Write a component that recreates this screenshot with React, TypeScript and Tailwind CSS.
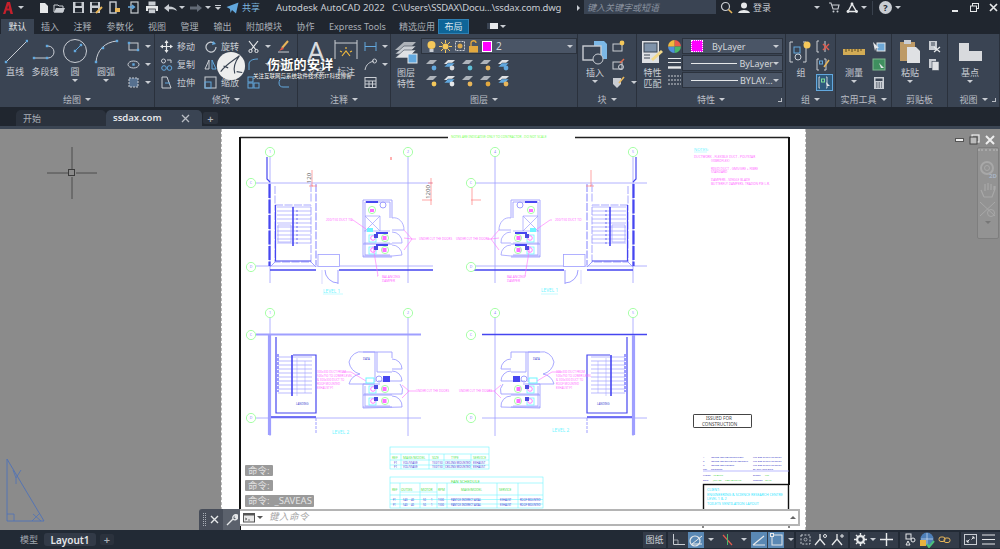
import React from "react";

const G = "#c9cdd3";
const B = "#62a8de";
const W = "#e6e8ea";
const Y = "#e8b65a";

type SP = { w: number; h: number; children?: React.ReactNode; className?: string };
const S = ({ w, h, children, className }: SP) => (
  <svg width={w} height={h} viewBox={`0 0 ${w} ${h}`} fill="none" className={"shrink-0 " + (className || "")}>
    {children}
  </svg>
);
const Caret = ({ className }: { className?: string }) => (
  <span className={"inline-block w-0 h-0 border-x-[3px] border-x-transparent border-t-[3px] border-t-[#c9cdd3] " + (className || "")} />
);

/* ---------- title bar icons ---------- */
const Logo = () => (
  <S w={12} h={14}>
    <path d="M1 13 L5 1 H8 L11 13 H8.5 L7.5 9.5 H4.5 L3.4 13 Z" fill="#c4202c" />
    <path d="M5.3 7.5 H7 L6.2 4 Z" fill="#20262f" />
  </S>
);
const NewI = () => (<S w={10} h={12}><path d="M1 1 H6 L9 4 V11 H1 Z" fill={W} /></S>);
const OpenI = () => (<S w={12} h={12}><path d="M1 3 H5 L6 4 H10 V10 H1 Z" stroke={G} /><path d="M3 6 H12 L10 10.5 H1 Z" fill={G} /></S>);
const SaveI = () => (<S w={13} h={13}><rect x="1" y="1" width="11" height="11" fill={G} /><rect x="3.5" y="1.5" width="6" height="3.5" fill="#20262f" /><rect x="3" y="7" width="7" height="4.5" fill="#20262f" /></S>);
const SaveAsI = () => (<S w={14} h={13}><rect x="1" y="1" width="10" height="11" fill={G} /><rect x="3" y="1.5" width="6" height="3" fill="#20262f" /><rect x="3" y="7" width="6" height="4.5" fill="#20262f" /><path d="M7 12 L13 6" stroke={Y} strokeWidth="2" /></S>);
const PhoneI = () => (<S w={12} h={13}><rect x="1" y="1" width="6" height="11" stroke={G} strokeWidth="1.4" /><rect x="6" y="7" width="5" height="4" fill={Y} /></S>);
const CloudI = () => (<S w={12} h={13}><rect x="3" y="1" width="7" height="11" stroke={G} strokeWidth="1.2" /><path d="M0 6 H6 M4 4 L6.5 6 L4 8" stroke={B} strokeWidth="1.3" /></S>);
const PrintI = () => (<S w={14} h={13}><rect x="3.5" y="0.5" width="7" height="4" fill={G} /><rect x="1" y="5" width="12" height="5" fill={W} /><rect x="3.5" y="8" width="7" height="4.5" fill={G} stroke="#20262f" strokeWidth=".7" /></S>);
const UndoI = ({ c = G }: { c?: string }) => (<S w={15} h={10}><path d="M1 5 L6 1 V3.5 C10 3.5 13 5 14 8 C12 6.5 9.5 6.2 6 6.3 V9 Z" fill={c} /></S>);
const RedoI = () => (<S w={14} h={10}><path d="M13 5 L8 1 V3.5 H1 V6.5 H8 V9 Z" fill="#626a76" /></S>);
const ShareI = () => (<S w={13} h={12}><path d="M0.5 5 L12.5 0.5 L10 11.5 L6 8 L4.5 11 L4 7 Z" fill={B} /></S>);

/* ---------- title bar ---------- */
function TitleBar() {
  return (
    <div className="h-[18px] flex items-center pb-[3px] bg-[#20262f] text-[#c9cdd3] text-[11px] leading-none relative">
      <div className="flex items-center pl-[2px] w-[26px] gap-[4px]"><Logo /><Caret /></div>
      <div className="flex items-center w-[250px] pl-[13px]">
        <NewI />
        <span className="w-[4px]" /><OpenI />
        <span className="w-[7px]" /><SaveI />
        <span className="w-[4px]" /><SaveAsI />
        <span className="w-[6px]" /><PhoneI />
        <span className="w-[7px]" /><CloudI />
        <span className="w-[5px]" /><PrintI />
        <span className="w-[4px]" /><UndoI />
        <Caret className="ml-[1px]" />
        <span className="w-[4px]" /><RedoI />
        <Caret className="ml-[2px]" />
        <span className="ml-[4px] w-[6px] h-[5px] border-t border-[#c9cdd3] flex justify-center pt-[1px]"><Caret /></span>
        <span className="w-[5px]" /><ShareI />
        <span className="ml-[3px] text-[9px] text-[#7eb6df] whitespace-nowrap">共享</span>
      </div>
      <span className="text-[9.5px] w-[116px] whitespace-nowrap">Autodesk AutoCAD 2022</span>
      <span className="text-[9.5px] w-[185px] whitespace-nowrap tracking-[-0.2px]">C:\Users\SSDAX\Docu...\ssdax.com.dwg</span>
      <span className="w-0 h-0 border-y-[3px] border-y-transparent border-l-[3px] border-l-[#c9cdd3] mr-[4px]" />
      <div className="w-[132px] h-[14px] bg-[#3a4453] flex items-center pl-[3px] text-[9px] italic text-[#8b93a0] self-start">键入关键字或短语</div>
      <span className="w-[4px]" />
      <S w={13} h={13}><circle cx="5.5" cy="5.5" r="4" stroke={G} strokeWidth="1.2" /><path d="M8.5 8.5 L12 12" stroke={Y} strokeWidth="1.6" /></S>
      <span className="w-[5px]" />
      <S w={12} h={12}><circle cx="6" cy="3.5" r="3" fill={W} /><path d="M0 11 C1 7 11 7 12 11 Z" fill={W} /></S>
      <span className="ml-[3px] text-[9px] w-[61px]">登录</span>
      <Caret />
      <span className="w-[9px]" />
      <S w={11} h={11}><path d="M0 1 H2 L4 7 H9 L10 3 H3" stroke={G} strokeWidth="1.1" /><circle cx="4.5" cy="9.5" r="1" fill={G} /><circle cx="8.5" cy="9.5" r="1" fill={G} /></S>
      <span className="w-[6px]" />
      <S w={12} h={11}><path d="M6 2 L2 9.5 H10.5 Z" stroke={W} strokeWidth="1.4" /><circle cx="6" cy="2" r="1.4" fill={W} /><circle cx="2" cy="9.5" r="1.4" fill={W} /><circle cx="10.5" cy="9.5" r="1.4" fill={W} /></S>
      <Caret className="ml-[3px]" />
      <span className="ml-[5px] w-px h-[14px] bg-[#39414d]" />
      <span className="ml-[6px] w-[13px] h-[13px] rounded-full bg-[#c9cdd3] text-[#20262f] text-[9px] font-bold flex items-center justify-center">?</span>
      <Caret className="ml-[3px]" />
      <span className="w-[51px]" />
      <span className="w-[6px] h-[2px] bg-[#e6e8ea] mt-[7px]" />
      <span className="w-[12px]" />
      <S w={9} h={9}><rect x="2.5" y=".5" width="6" height="5" stroke={W} /><rect x=".5" y="3" width="6" height="5.5" fill="#20262f" stroke={W} /></S>
      <span className="w-[10px]" />
      <S w={9} h={9}><path d="M1 1 L8 8 M8 1 L1 8" stroke={W} strokeWidth="1.7" /></S>
    </div>
  );
}

/* ---------- ribbon tab row ---------- */
const TABS: [string, number, boolean?][] = [
  ["默认", 33, true], ["插入", 32], ["注释", 33], ["参数化", 42], ["视图", 32], ["管理", 33], ["输出", 33], ["附加模块", 50], ["协作", 33], ["Express Tools", 71], ["精选应用", 48],
];
function TabRow() {
  return (
    <div className="h-[16px] flex items-end bg-[#20262f] text-[9px] leading-none text-[#a9aeb6]">
      <span className="w-[1px]" />
      {TABS.map(([t, w, a]) => (
        <span key={t} style={{ width: w }} className={"h-[15px] flex items-center justify-center whitespace-nowrap " + (a ? "bg-[#3a4453] text-[#e4e6e9]" : "")}>{t}</span>
      ))}
      <span className="ml-[-3px] w-[31px] h-[15px] flex items-center justify-center bg-[#0e6598] border border-[#2f7fb2] text-[#d9e6ef]">布局</span>
      <span className="ml-[18px] mb-[5px] w-[11px] h-[6px] bg-[#e6e8ea] border-l-[3px] border-[#3a4453]" />
      <Caret className="ml-[2px] mb-[6px]" />
    </div>
  );
}

/* ---------- ribbon parts ---------- */
const Dot = ({ x, y }: { x: number; y: number }) => <rect x={x - 1.2} y={y - 1.2} width="2.4" height="2.4" fill={B} />;

const Panel = ({ w, label, caret = true, corner, children }: { w: number; label: string; caret?: boolean; corner?: boolean; children: React.ReactNode }) => (
  <div style={{ width: w }} className="h-full flex flex-col border-r border-[#2a313c] shrink-0 relative">
    <div className="h-[58px] flex pt-[4px]">{children}</div>
    <div className="h-[15px] flex items-center justify-center gap-[4px] text-[9px] text-[#b9bdc4] leading-none">
      {label}
      {caret && <Caret />}
      {corner && <span className="absolute right-[3px] bottom-[5px] w-[4px] h-[4px] border-r border-b border-[#b9bdc4]" />}
    </div>
  </div>
);
const Big = ({ w, icon, label, label2, caret, ih = 28 }: { w: number; icon: React.ReactNode; label: string; label2?: string; caret?: boolean; ih?: number }) => (
  <div style={{ width: w }} className="flex flex-col items-center shrink-0 text-[9px] leading-[11px] text-[#c9cdd3]">
    <div style={{ height: ih }} className="flex items-center justify-center pb-[2px]">{icon}</div>
    <span className="whitespace-nowrap">{label}</span>
    {label2 && <span className="whitespace-nowrap">{label2}</span>}
    {caret && <Caret className="mt-[2px]" />}
  </div>
);
const Rows = ({ w, children, className }: { w: number; children: React.ReactNode; className?: string }) => (
  <div style={{ width: w }} className={"flex flex-col justify-start gap-[1px] shrink-0 text-[9px] text-[#c9cdd3] leading-none " + (className || "")}>{children}</div>
);
const Row = ({ icon, label, caret }: { icon: React.ReactNode; label?: string; caret?: boolean }) => (
  <div className="h-[17px] flex items-center gap-[4px] whitespace-nowrap">
    {icon}
    {label && <span>{label}</span>}
    {caret && <Caret className="ml-[1px]" />}
  </div>
);

const MiniLayer = ({ dot = B, style = 0 }: { dot?: string; style?: number }) => (
  <S w={14} h={14}>
    <path d="M1 6 L5 2 H12 L8 6 Z" fill={style ? "#dfe1e4" : "#aeb3ba"} />
    {style === 1 && <path d="M1 9 L5 5 H12 L8 9 Z" fill={B} stroke="#3a4453" strokeWidth=".5" />}
    <circle cx="9" cy="10" r="2.4" fill={dot} />
  </S>
);
const Bulb = () => (<S w={11} h={13}><circle cx="5.5" cy="5" r="4" fill="#f5c85a" /><rect x="3.5" y="9" width="4" height="3" fill={G} /></S>);
const Sun = () => (<S w={13} h={13}><circle cx="6.5" cy="6.5" r="3" fill="#f5c85a" /><path d="M6.5 0 V3 M6.5 10 V13 M0 6.5 H3 M10 6.5 H13 M2 2 L4 4 M9 9 L11 11 M11 2 L9 4 M4 9 L2 11" stroke="#f5c85a" /></S>);
const Sel = () => (<S w={12} h={12}><rect x="1.5" y="1.5" width="9" height="9" stroke={G} strokeDasharray="2 1" /><circle cx="6" cy="6" r="2.5" fill="#d9a84e" /></S>);
const Lock = () => (<S w={11} h={13}><rect x="1" y="6" width="9" height="6.5" fill="#e3a93f" /><path d="M3 6 V3 C3 0 8 0 8 3" stroke="#e3a93f" strokeWidth="1.3" /></S>);

const DD = ({ swatch, line, text }: { swatch?: boolean; line?: boolean; text: string }) => (
  <div className="w-[101px] h-[16px] bg-[#4a5566] border border-[#2c333e] flex items-center pl-[8px] pr-[3px] text-[9px] text-[#d5d8dc] leading-none">
    {swatch && <span className="w-[12px] h-[12px] bg-[#ff00ff] border border-dotted border-white mr-[9px]" />}
    {line && <span className="w-[47px] h-px bg-[#e6e8ea] mr-[2px]" />}
    <span className="flex-1 whitespace-nowrap">{text}</span>
    <Caret />
  </div>
);

function Ribbon() {
  return (
    <div className="h-[73px] flex bg-[#3a4453]">
      <Panel w={155} label="绘图">
        <Big w={30} label="直线" icon={<S w={26} h={26}><path d="M4 24 L25 3" stroke={G} /><Dot x={4} y={24} /><Dot x={25} y={3} /></S>} />
        <Big w={30} label="多段线" icon={<S w={26} h={26}><path d="M2 20 H16 A6 6 0 0 0 16 8 H15" stroke={G} /><Dot x={2} y={20} /><Dot x={15} y={20} /><Dot x={15} y={8} /></S>} />
        <Big w={30} label="圆" caret icon={<S w={26} h={26}><circle cx="13" cy="13" r="11.5" stroke={G} /><path d="M13 13 L19 7" stroke={B} /><Dot x={13} y={13} /><Dot x={19} y={7} /></S>} />
        <Big w={32} label="圆弧" caret icon={<S w={26} h={26}><path d="M3 24 C4 12 12 4 24 3" stroke={G} /><Dot x={3} y={24} /><Dot x={10} y={10} /><Dot x={24} y={3} /></S>} />
        <Rows w={33} className="pl-[5px]">
          <Row caret icon={<S w={13} h={13}><rect x="2" y="3" width="9" height="7" stroke={G} /><Dot x={2} y={3} /><Dot x={11} y={10} /></S>} />
          <Row caret icon={<S w={13} h={13}><ellipse cx="6.5" cy="6.5" rx="5.5" ry="3.5" stroke={G} /><Dot x={6.5} y={6.5} /></S>} />
          <Row caret icon={<S w={13} h={13}><rect x="2" y="2" width="9" height="9" fill="#56708f" stroke={G} strokeDasharray="2 1" /></S>} />
        </Rows>
      </Panel>
      <Panel w={143} label="修改">
        <Rows w={44} className="pl-[5px]">
          <Row label="移动" icon={<S w={13} h={13}><path d="M6.5 1 V12 M1 6.5 H12" stroke={W} strokeWidth="1.2" /><path d="M6.5 0 L4.5 3 H8.5 Z M6.5 13 L4.5 10 H8.5 Z M0 6.5 L3 4.5 V8.5 Z M13 6.5 L10 4.5 V8.5 Z" fill={W} /></S>} />
          <Row label="复制" icon={<S w={13} h={13}><circle cx="3.5" cy="3" r="2" stroke={G} /><circle cx="4" cy="10" r="2.3" stroke={B} /><circle cx="9.5" cy="10" r="2.3" stroke={B} /><path d="M7 2 H11 V5" stroke={G} /></S>} />
          <Row label="拉伸" icon={<S w={13} h={13}><path d="M2 1 H7 L11 12 H2 Z" stroke={G} /><path d="M5 7 H10" stroke={B} /></S>} />
        </Rows>
        <Rows w={44} className="pl-[5px]">
          <Row label="旋转" icon={<S w={13} h={13}><path d="M10.5 3.5 A5 5 0 1 0 12 7" stroke={G} strokeWidth="1.2" /><path d="M9 1 L12 4 L8 5 Z" fill={B} /></S>} />
          <Row label="镜像" icon={<S w={13} h={13}><path d="M5 2 L1 11 H5 Z" stroke={G} /><path d="M8 2 L12 11 H8 Z" stroke={B} /></S>} />
          <Row label="缩放" icon={<S w={13} h={13}><rect x="1" y="1" width="11" height="11" stroke={G} /><rect x="1" y="6" width="6" height="6" stroke={B} /></S>} />
        </Rows>
        <Rows w={34} className="pl-[4px]">
          <Row caret icon={<S w={13} h={13}><path d="M2 1 L9 10 M11 1 L4 10" stroke={W} strokeWidth="1.2" /><circle cx="3.5" cy="11" r="1.6" stroke={W} /><circle cx="9.5" cy="11" r="1.6" stroke={W} /></S>} />
          <Row caret icon={<S w={13} h={13}><path d="M2 12 V6 C2 3 5 1 11 1" stroke={B} /></S>} />
          <Row icon={<S w={13} h={13}><rect x="1" y="1" width="5" height="5" stroke={B} /><rect x="7" y="7" width="5" height="5" stroke={B} /><rect x="1" y="7" width="5" height="5" stroke={B} /></S>} />
        </Rows>
        <Rows w={21}>
          <Row icon={<S w={13} h={13}><path d="M11 1 L5 8" stroke={Y} strokeWidth="2" /><path d="M1 12 H12" stroke={G} /><path d="M2 11 L5 7 L7 9 Z" fill="#e85a4a" /></S>} />
          <Row icon={<S w={13} h={13}><path d="M1 4 H8 M1 8 H8" stroke={G} /></S>} />
          <Row icon={<S w={13} h={13}><path d="M12 2 H6 C3 2 2 5 2 7 C2 10 4 11 6 11 H12" stroke={B} /></S>} />
        </Rows>
      </Panel>
      <Panel w={93} label="注释">
        <Big w={36} label="文字" ih={28} icon={<span className="text-[28px] leading-none text-[#d9dbde] font-normal">A</span>} />
        <Big w={24} label="标注" ih={28} icon={<S w={24} h={24}><path d="M1 1 V20 M23 1 V20 M1 4 H23" stroke={G} /><path d="M8 17 L12 12 L16 17 M12 8 V10 M6 12 L8 13 M18 12 L16 13" stroke="#f0b93e" strokeWidth="1.2" /></S>} />
        <Rows w={33} className="pl-[6px]">
          <Row caret icon={<S w={13} h={13}><path d="M1 2 V11 M12 2 V11 M1 6.5 H12" stroke={B} /></S>} />
          <Row caret icon={<S w={13} h={13}><path d="M1 12 C2 6 6 4 10 3" stroke={G} /><circle cx="10.5" cy="3" r="2" stroke={G} /></S>} />
          <Row icon={<S w={13} h={13}><rect x="1" y="1.5" width="11" height="10" stroke={G} /><path d="M1 5 H12 M1 8 H12 M5 5 V11 M8.5 5 V11" stroke={G} /></S>} />
        </Rows>
      </Panel>
      <Panel w={187} label="图层">
        <Big w={30} label="图层" label2="特性" ih={29} icon={<S w={24} h={25}><path d="M1 11 L10 3 H22 L14 11 Z" fill="#aeb3ba" /><path d="M1 15 L10 7 H22 L14 15 Z" fill="#c9cdd3" stroke="#3a4453" strokeWidth=".6" /><path d="M1 19 L10 11 H22 L14 19 Z" fill="#dfe1e4" stroke="#3a4453" strokeWidth=".6" /><rect x="14" y="15" width="9" height="9" fill={B} stroke={W} /></S>} />
        <div className="flex flex-col w-[156px]">
          <div className="h-[16px] bg-[#4a5566] border border-[#2c333e] flex items-center pl-[4px] gap-[2px] text-[10px] text-[#d5d8dc]">
            <Bulb /><Sun /><Sel /><Lock />
            <span className="w-[10px] h-[11px] bg-[#ff00ff] border border-white ml-[1px]" />
            <span className="ml-[2px] flex-1">2</span>
            <Caret className="mr-[3px]" />
          </div>
          <div className="grid grid-cols-[repeat(5,18px)] gap-y-[2px] mt-[4px] pl-[4px]">
            <MiniLayer /><MiniLayer style={1} dot="#d9dbde" /><MiniLayer dot="#5fc0d8" /><MiniLayer dot={Y} /><MiniLayer style={1} />
            <MiniLayer dot="#f5c85a" /><MiniLayer style={1} dot={W} /><MiniLayer dot={Y} /><MiniLayer dot="#e3a93f" /><MiniLayer style={1} dot={Y} />
          </div>
        </div>
      </Panel>
      <Panel w={59} label="块">
        <Big w={34} label="插入" caret ih={29} icon={<S w={26} h={26}><path d="M12 2 H22 L25 5 V20 H12 Z" fill="#7cb8e6" /><rect x="1" y="7" width="18" height="14" fill="#3a4453" stroke={G} strokeWidth="1.4" /><circle cx="16" cy="20" r="5" fill="#3a4453" stroke={G} /></S>} />
        <Rows w={25}>
          <Row icon={<S w={14} h={13}><rect x="1" y="4" width="9" height="7" stroke={G} /><circle cx="10" cy="3" r="2.4" fill="#f5c85a" /></S>} />
          <Row icon={<S w={14} h={13}><rect x="1" y="4" width="9" height="7" stroke={G} /><circle cx="9" cy="9" r="2.5" stroke={G} /><path d="M12 1 L8 5" stroke="#e06b4c" strokeWidth="1.5" /></S>} />
          <Row caret icon={<S w={14} h={13}><path d="M1 2 H9 V8 L5 12 L1 8 Z" fill={G} /><path d="M12 1 L7 7" stroke={Y} strokeWidth="1.6" /></S>} />
        </Rows>
      </Panel>
      <Panel w={149} label="特性" corner>
        <Big w={31} label="特性" label2="匹配" ih={29} icon={<S w={24} h={24}><rect x="1" y="1" width="17" height="22" fill="#dfe1e4" /><rect x="3" y="3" width="13" height="9" fill="#7f93aa" stroke="#3a4453" /><path d="M3 15 H9 M3 18 H9" stroke="#3a4453" /><path d="M11 20 L21 11" stroke="#f3d98a" strokeWidth="3" /></S>} />
        <div className="flex flex-col pt-[2px] w-[13px] gap-[4px] items-center">
          <S w={13} h={13}><path d="M6.5 6.5 V0 A6.5 6.5 0 0 1 13 6.5 Z" fill="#e85a4a" /><path d="M6.5 6.5 H13 A6.5 6.5 0 0 1 6.5 13 Z" fill="#49b86b" /><path d="M6.5 6.5 V13 A6.5 6.5 0 0 1 0 6.5 Z" fill="#4f8fdc" /><path d="M6.5 6.5 H0 A6.5 6.5 0 0 1 6.5 0 Z" fill="#f0b93e" /></S>
          <S w={13} h={13}><path d="M0 1.5 H13 M0 5.5 H13" stroke={W} /><path d="M0 10.5 H13" stroke={W} strokeWidth="2.4" /></S>
          <S w={13} h={13}><path d="M0 2 H13 M0 6 H13 M0 10 H13" stroke={G} strokeDasharray="2 1" /></S>
        </div>
        <div className="flex flex-col gap-[1px] ml-[1px]">
          <DD swatch text="ByLayer" />
          <DD line text="ByLayer" />
          <DD line text="BYLAY..." />
        </div>
      </Panel>
      <Panel w={50} label="组">
        <Big w={30} label="组" ih={29} icon={<S w={24} h={26}><path d="M4 3 H1 V23 H4 M14 3 H17 V23 H14" stroke={G} /><rect x="5" y="8" width="6" height="6" stroke={B} /><circle cx="9" cy="18" r="3" stroke={G} /><circle cx="18" cy="6" r="3.5" fill="#f5c85a" /></S>} />
        <Rows w={19}>
          <Row icon={<S w={15} h={13}><path d="M1 1 H3 M1 12 H3 M1 1 V12 M9 1 V12" stroke={G} /><path d="M7 4 L13 10 M13 4 L7 10" stroke="#e25b4d" strokeWidth="1.4" /></S>} />
          <Row icon={<S w={15} h={13}><path d="M3 1 H1 V12 H3 M8 1 H10 V12 H8" stroke={G} /><path d="M13 2 L8 9" stroke={Y} strokeWidth="1.5" /><rect x="3.5" y="3" width="3" height="3" stroke={B} /></S>} />
          <div className="h-[17px] w-[17px] bg-[#2f5a7c] border border-[#62a8de] flex items-center justify-center"><S w={13} h={13}><path d="M2 1 H1 V12 H2 M8 1 H9 V12 H8" stroke={G} /><rect x="3.5" y="3" width="3" height="3" stroke="#7fe09a" /><path d="M8 6 L12 10 L9 10 Z" fill={W} /></S></div>
        </Rows>
      </Panel>
      <Panel w={56} label="实用工具">
        <Big w={36} label="测量" caret ih={29} icon={<S w={24} h={10}><rect x="1" y="2" width="22" height="6" fill="#d3ac55" /><path d="M4 2 V5 M7 2 V4 M10 2 V5 M13 2 V4 M16 2 V5 M19 2 V4" stroke="#5c4a20" /></S>} />
        <Rows w={20}>
          <Row icon={<S w={14} h={13}><rect x="5" y="3" width="8" height="8" fill="#6ea8d6" stroke={W} /><path d="M1 2 L7 8 L4 8 L3 11 Z" fill={W} /></S>} />
          <Row icon={<S w={14} h={13}><rect x="1" y="1" width="12" height="11" fill="#3f8f5f" stroke="#7fb890" /><path d="M7 5 L12 10 L9 10 Z" fill={W} /></S>} />
          <Row icon={<S w={14} h={13}><rect x="2" y="1" width="10" height="12" fill={G} /><rect x="3.5" y="2.5" width="7" height="2.5" fill="#3a4453" /><path d="M4 7 H10 M4 9 H10 M4 11 H10" stroke="#3a4453" strokeDasharray="1.5 1" /></S>} />
        </Rows>
      </Panel>
      <Panel w={56} label="剪贴板" caret={false}>
        <Big w={36} label="粘贴" caret ih={29} icon={<S w={22} h={25}><rect x="1" y="3" width="15" height="19" fill="#bd9a66" /><rect x="5" y="1" width="7" height="4" fill={G} /><path d="M8 8 H17 L21 12 V24 H8 Z" fill="#dfe1e4" /></S>} />
        <Rows w={20}>
          <Row icon={<S w={13} h={13}><rect x="1" y="1" width="8" height="9" fill={G} /><path d="M3 3 H7 M3 5 H7" stroke="#3a4453" /><path d="M6 7 L12 12 M12 7 L6 12" stroke={W} strokeWidth="1.2" /></S>} />
          <Row icon={<S w={13} h={13}><rect x="1" y="1" width="7" height="9" fill={G} /><rect x="4" y="3.5" width="7" height="9" fill="#dfe1e4" stroke="#3a4453" strokeWidth=".6" /></S>} />
        </Rows>
      </Panel>
      <Panel w={52} label="视图" corner>
        <div className="w-[44px]">
          <Big w={44} label="基点" caret ih={29} icon={<S w={25} h={20}><path d="M1 1 H11 V9 H24 V19 H1 Z" fill="#d8dadd" /></S>} />
        </div>
      </Panel>
    </div>
  );
}

/* ---------- document tabs ---------- */
function DocTabs() {
  return (
    <>
      <div className="h-[19px] flex items-end bg-[#20262f] text-[#c4c8ce] leading-none">
        <span className="ml-[16px] w-[90px] h-[16px] bg-[#2b323d] rounded-t-[5px] flex items-center pl-[7px] text-[9px] text-[#a9aeb6]">开始</span>
        <span className="w-[96px] h-[16px] bg-[#3a4453] rounded-t-[5px] flex items-center pl-[7px] text-[9.5px] font-semibold text-[#e4e6e9]">
          ssdax.com
          <S w={9} h={9} className="ml-[19px]"><path d="M1 1 L8 8 M8 1 L1 8" stroke="#b9bdc4" strokeWidth="1.3" /></S>
        </span>
        <span className="ml-[1px] w-[15px] h-[12px] mb-[2px] bg-[#2b323d] rounded-[2px] flex items-center justify-center text-[11px] font-semibold text-[#aab0b8]">+</span>
      </div>
      <div className="h-[3px] bg-[#3b4553]" />
    </>
  );
}

/* ---------- paper drawing ---------- */
const TH = "#4646f0";
const LN = "#9f9fff";
const MG = "#ff70ff";
const GN = "#9dff9d";
const CY = "#6ff5ff";

const Bubble = ({ x, y, t }: { x: number; y: number; t: string }) => (
  <g>
    <circle cx={x} cy={y} r="4.6" stroke={GN} strokeWidth="0.9" fill="#fff" />
    <text x={x} y={y + 1} fontSize="3.6" textAnchor="middle" fill="#8c8cff">{t}</text>
  </g>
);
const T = ({ x, y, s = 3.2, c = MG, a, children }: { x: number; y: number; s?: number; c?: string; a?: "middle" | "end"; children: React.ReactNode }) => (
  <text x={x} y={y} fontSize={s} fill={c} textAnchor={a}>{children}</text>
);

const range = (a: number, b: number, st: number) => {
  const o: number[] = [];
  for (let v = a; v <= b; v += st) o.push(v);
  return o;
};

function Fixtures({ y }: { y: number }) {
  return (
    <g>
      <rect x={369} y={y} width={7} height={7} stroke={CY} strokeWidth=".8" />
      <circle cx={373} cy={y + 3} r={2.3} stroke={MG} strokeWidth=".9" />
      <rect x={374} y={y - 1} width={4} height={4} fill="#4a4ae0" />
      <circle cx={385} cy={y + 3} r={3.6} stroke={GN} strokeWidth=".9" />
      <rect x={382.5} y={y + 1} width={4} height={4} fill={MG} />
      <path d={`M363 ${y + 9} H392`} stroke={LN} />
    </g>
  );
}

function Level1() {
  return (
    <g strokeLinecap="butt">
      <path d="M270 157 V283 M408 157 V283 M256 183 H432 M256 266 H433" stroke={LN} strokeWidth=".8" />
      <path d="M267 157 V179 L270 182" stroke={TH} strokeWidth="1.2" />
      <path d="M269.5 184 V266" stroke={TH} strokeWidth="2.2" strokeDasharray="14 1.5" />
      <path d="M275 186 V204 M275 205 H311 V262 H275 Z M311 184 V203" stroke={LN} strokeWidth=".9" strokeDasharray="8 1.5" />
      <path d="M275.5 205 V261 H311" stroke={TH} strokeWidth="1.2" />
      <path d="M316 184 V265" stroke={LN} strokeWidth="1.3" strokeDasharray="8 1.5" />
      <path d="M270 267 L275 262 M316 267 L311 262" stroke={LN} />
      <path d="M270 270 H316 M339 270 H433" stroke={TH} strokeWidth="1.5" />
      {range(207, 245, 4).map((y) => <path key={y} d={`M277 ${y} H311`} stroke={LN} strokeWidth=".7" />)}
      <path d="M293 207 V246" stroke={TH} strokeWidth="1.6" />
      <path d="M278 225 H291 V242 H278 Z" stroke={LN} strokeWidth=".7" />
      {range(211, 243, 4).map((y) => <circle key={y} cx={297} cy={y} r=".7" fill={TH} />)}
      <rect x={318} y={254.5} width={21.5} height={12} stroke={LN} strokeWidth=".8" fill="#fff" />
      <path d="M325 270 A 13 13 0 0 0 338 283 M338 270 V284" stroke={LN} />
      <path d="M322 270 V284" stroke={LN} strokeWidth=".4" />
      {/* toilet */}
      <path d="M363 200 H392 V218 M363 200 V257 H392 M365 202 H390 V218 M365 202 V255 H390" stroke={LN} strokeWidth=".9" />
      <path d="M392 218 A10 12 0 0 1 404 230 H392 M392 232 A10 10 0 0 1 402 243 H392 M392 245 A10 10 0 0 1 402 255 L392 256" stroke={LN} strokeWidth=".8" />
      <path d="M364 231 H390 M364 243 H390 M365 216 H380 V231 M365 216 L380 231 M380 216 L365 231" stroke={LN} strokeWidth=".7" />
      <rect x={366} y={201} width={12} height={2} fill={TH} />
      <circle cx={383} cy={205} r={3} stroke={LN} />
      <circle cx={372} cy={210} r={3.6} stroke={GN} strokeWidth=".9" />
      <rect x={370} y={209} width={4} height={3} fill={MG} />
      <Fixtures y={235} />
      <Fixtures y={247} />
      <rect x={367} y={228} width={6} height={4} fill={CY} />
      <rect x={376} y={232} width={12} height={2} fill={TH} />
      <rect x={376} y={244} width={12} height={2} fill={TH} />
      {/* leaders */}
      <path d="M351 220 H353 L366 229 M373 246 L378 276 H377 M404 238 L412 239 M404 230 L412 239 M404 250 L412 239 M412 239 H416" stroke={MG} strokeWidth=".6" />
      <path d="M317 186 H312 V170 M309 186 H313 M431 178 V205 M422 200 H432 M428 183 H433" stroke="#ff8080" strokeWidth=".7" />
    </g>
  );
}
function Level2({ thick }: { thick?: boolean }) {
  return (
    <g>
      <path d="M270 318 V436 M408 318 V436 M256 418 H421" stroke={LN} strokeWidth=".8" />
      <path d="M256 334.5 H421" stroke={thick ? TH : LN} strokeWidth={thick ? 1.3 : 2} />
      <path d="M269.5 335 V435" stroke={LN} strokeWidth="3.2" />
      <path d="M276 337 V413 H316 V355 H293" stroke={TH} strokeWidth="1.2" />
      <path d="M271 417 H316" stroke={TH} strokeWidth="1.6" />
      <path d="M316 418 V434" stroke={LN} strokeDasharray="3 1" />
      {range(357, 395, 4).map((y) => <path key={y} d={`M278 ${y} H312`} stroke={LN} strokeWidth=".7" />)}
      <path d="M292 355 V396" stroke={TH} strokeWidth="1.6" />
      <path d="M278 354 V392" stroke={LN} strokeWidth="2" strokeDasharray="3 1" />
      <path d="M297 358 V396 M305 361 V393" stroke={LN} strokeWidth=".5" />
      <path d="M363 352 H392 V358 M363 352 H375 V382 M377 352 V372 H392 M363 352 A12 14 0 0 0 349 362 A14 14 0 0 0 360 374 A14 14 0 0 0 349 384 H375" stroke={LN} strokeWidth=".9" />
      <path d="M392 359 A10 10 0 0 1 402 369 H392 M392 371 A10 10 0 0 1 402 381 H378 M400 384 A10 10 0 0 1 402 394 H364 M392 396 A10 10 0 0 1 402 407 L363 408 V384 H380" stroke={LN} strokeWidth=".9" />
      <path d="M365 386 V406 H390" stroke={LN} strokeWidth=".8" />
      <rect x={383} y={376} width={7} height={6} fill={TH} />
      <circle cx={379} cy={379} r={3} stroke={LN} />
      <Fixtures y={386} />
      <Fixtures y={398} />
      <rect x={366} y={378} width={8} height={5} stroke={CY} />
      <path d="M342 372 H351 L366 381 M402 385 L409 391 M402 398 L409 391 M409 391 H416" stroke={MG} strokeWidth=".6" />
    </g>
  );
}
const TableGrid = ({ x, y, w, rows, cols }: { x: number; y: number; w: number; rows: number[]; cols: number[] }) => (
  <g stroke="#72f5ff" strokeWidth=".6">
    <rect x={x} y={y} width={w} height={rows[rows.length - 1]} />
    {rows.slice(0, -1).map((r) => <path key={r} d={`M${x} ${y + r} H${x + w}`} />)}
    {cols.map((c) => <path key={c} d={`M${x + c} ${y + rows[0]} V${y + rows[rows.length - 1]}`} />)}
  </g>
);

function Drawing() {
  const M = "translate(903 0) scale(-1 1)";
  return (
    <svg width={583} height={401} viewBox="222 129 583 401" className="block" fill="none">
      {/* frame */}
      <path d="M240 137.5 H448 M575 137.5 H789" stroke="#222" strokeWidth="1.6" />
      <path d="M240 137 V530" stroke="#111" strokeWidth="2" />
      <path d="M789 137 V485" stroke="#111" strokeWidth="2" />
      <T x={451} y={137.5} s={3.2} c="#7dff5a">NOTES ARE INDICATIVE ONLY TO CONTRACTOR . DO NOT SCALE</T>

      <Level1 />
      <g transform={M}><Level1 /></g>
      <Level2 />
      <g transform={M}><Level2 thick /></g>

      {/* bubbles */}
      {[[270, 152, "1"], [408, 152, "2"], [495, 152, "4"], [633, 152, "5"], [270, 313, "1"], [408, 313, "2"], [495, 313, "4"], [633, 313, "5"], [251, 183, "C"], [471, 183, "C"], [251, 267, "D"], [471, 267, "D"], [251, 335, "C"], [471, 335, "C"], [251, 418, "D"], [471, 418, "D"]].map(([x, y, t], i) => (
        <Bubble key={i} x={x as number} y={y as number} t={t as string} />
      ))}

      {/* dim text */}
      <text transform="translate(311 178) rotate(-90)" fontSize="6" fill="#666" textAnchor="middle">120</text>
      <text transform="translate(430 192) rotate(-90)" fontSize="6" fill="#666" textAnchor="middle">1200</text>
      <rect x={390} y={157} width={2} height={3} fill="#ffb0b0" />

      {/* labels */}
      <T x={326} y={221}>200/150 DUCT TO</T>
      <T x={419} y={240} s={2.9}>UNDER CUT THE DOORS</T>
      <T x={456} y={240} s={2.9}>UNDER CUT THE DOORS</T>
      <T x={382} y={278}>BALANCING</T>
      <T x={382} y={282}>DAMPER</T>
      <T x={507} y={278}>BALANCING</T>
      <T x={507} y={282}>DAMPER</T>
      <T x={555} y={221}>200/150 DUCT TO</T>
      <T x={323} y={293} s={4.8} c={CY}>LEVEL 1</T>
      <path d="M323 294 H343 M541 294 H558" stroke={CY} strokeWidth=".4" />
      <T x={541} y={292} s={4.8} c={CY}>LEVEL 1</T>
      <T x={332} y={434} s={4.8} c={CY}>LEVEL 2</T>
      <T x={552} y={432} s={4.8} c={CY}>LEVEL 2</T>
      <T x={296} y={405} s={2.8} c="#4646d0">LANDING</T>
      <T x={597} y={405} s={2.8} c="#4646d0">LANDING</T>
      <T x={363} y={360} s={2.8} c="#4646d0">DATA</T>
      <T x={533} y={360} s={2.8} c="#4646d0">DATA</T>
      {["300x300 DUCT FROM", "500x750 TO LOWER LEVEL", "& 300x300 DUCT TO", "ROOF MOUNTED", "EXHAUST F1"].map((t, i) => (
        <T key={t} x={317} y={373 + i * 4} s={2.9}>{t}</T>
      ))}
      {["300x300 DUCT FROM", "500x750 TO LOWER LEVEL", "& 300x300 DUCT TO", "ROOF MOUNTED", "EXHAUST F1"].map((t, i) => (
        <T key={t + "r"} x={556} y={373 + i * 4} s={2.9}>{t}</T>
      ))}
      <T x={416} y={392} s={2.9}>UNDER CUT THE DOORS</T>
      <T x={459} y={392} s={2.9}>UNDER CUT THE DOORS</T>

      {/* notes */}
      <T x={694} y={151} s={4.2} c={CY}>NOTES:</T>
      <path d="M694 152 H707" stroke={CY} strokeWidth=".4" />
      <T x={694} y={158}>DUCTWORK - FLEXIBLE DUCT - POLYSTAR</T>
      <T x={711} y={161.5}>(VIBROFLEX)</T>
      <T x={711} y={169.5}>RIGID DUCT - GMS/GRE + FIBRE</T>
      <T x={711} y={173}>STANDARD</T>
      <T x={711} y={181}>DAMPERS - SINGLE BLADE</T>
      <T x={711} y={184.5}>BUTTERFLY DAMPERS. TRADON PIE L.R.</T>

      {/* stamp */}
      <rect x={693.5} y={414.5} width={58} height={13} rx=".6" stroke="#444" strokeWidth="1" />
      <T x={706} y={420} s={4.6} c="#444">ISSUED FOR</T>
      <T x={702} y={426} s={4.6} c="#444">CONSTRUCTION</T>

      {/* schedules */}
      <TableGrid x={390} y={447} w={99} rows={[7, 13, 18, 22]} cols={[11, 39, 54, 81]} />
      {[["REF", 392], ["MAKE/MODEL", 403], ["SIZE", 432], ["TYPE", 451], ["SERVICE", 473]].map(([t, x]) => (
        <T key={t as string} x={x as number} y={458.5} s={3.4} c="#5fe85f">{t}</T>
      ))}
      {[464, 468].map((y) => (
        <g key={y}>
          {[["F1", 394], ["VOL/VSAVE", 403], ["150/150", 432], ["CEILING MOUNTED", 445], ["EXHAUST", 473]].map(([t, x]) => (
            <T key={t as string} x={x as number} y={y} s={2.8} c="#4848d8">{t}</T>
          ))}
        </g>
      ))}
      <TableGrid x={390} y={477} w={153} rows={[6, 18, 22.5, 27, 31]} cols={[10, 30, 47, 57, 107, 128]} />
      <T x={451} y={482.5} s={4} c="#50e050">FAN SCHEDULE</T>
      {[["REF", 392], ["OUTIES", 401], ["MOTOR", 421], ["RPM", 438], ["MAKE/MODEL", 461], ["SERVICE", 499]].map(([t, x]) => (
        <T key={t as string} x={x as number} y={491} s={3.2} c="#50e050">{t}</T>
      ))}
      <path d="M400 492 H420 M420 492 H437" stroke="#72f5ff" strokeWidth=".5" />
      {[501, 505.5].map((y) => (
        <g key={y}>
          {[["F1", 393], ["540", 403], ["40", 411], ["50", 423], ["1", 431], ["1500", 438], ["PANTOX INDIRECT AXIAL", 451], ["EXHAUST", 500], ["ROOF MOUNTED", 520]].map(([t, x], i) => (
            <T key={i} x={x as number} y={y} s={2.6} c="#4848d8">{t}</T>
          ))}
        </g>
      ))}

      {/* revisions */}
      {[458, 462, 466].map((y, i) => (
        <g key={y}>
          <T x={703} y={y} s={2.4} c="#3838c8">{`${i + 1}`}</T>
          <T x={711} y={y} s={2.4} c="#3838c8">{["ISSUED FOR CONSTRUCTION", "ISSUED FOR BUILDING CONSENT", "ISSUED FOR TENDER"][i]}</T>
          <T x={753} y={y} s={2.4} c="#3838c8">LTR DES CLIENT 26/03/09</T>
        </g>
      ))}
      <T x={703} y={470} s={2.4} c="#3838c8">Rev</T>
      <T x={711} y={470} s={2.4} c="#3838c8">Reference</T>
      <T x={753} y={470} s={2.4} c="#3838c8">By Chk Appd Date</T>
      <path d="M703 471 H789" stroke={LN} strokeWidth=".7" />
      <T x={703} y={476} s={2.4} c="#3838c8">Project</T>
      <T x={713} y={476} s={2.4} c="#3cd03c">AS BUILT</T>
      <T x={753} y={476} s={2.4} c="#3838c8">Drawn</T>
      <T x={765} y={476} s={2.4} c="#3cd03c">LTR</T>
      <T x={703} y={481} s={2.4} c="#3838c8">Date</T>
      <T x={713} y={481} s={2.4} c="#3cd03c">JULY 08</T>
      <T x={725} y={481} s={2.4} c="#3cd03c">NOT TO SCALE</T>
      <T x={753} y={481} s={2.4} c="#3838c8">Checked</T>
      <T x={765} y={481} s={2.4} c="#3cd03c">TEAM</T>
      <rect x={703.5} y={484.5} width={85} height={25.5} stroke="#111" strokeWidth="1.4" />
      <T x={707} y={490.5} s={3.6} c="#38e8ff">CLIENT:</T>
      <T x={707} y={495.5} s={3.6} c="#38e8ff">ENGINEERING &amp; SCIENCE RESEARCH CENTRE</T>
      <T x={707} y={500} s={3.6} c="#38e8ff">LEVEL 1 &amp; 2</T>
      <T x={707} y={505} s={3.6} c="#38e8ff">TOILETS VENTILATION LAYOUT</T>
      <T x={708} y={515} s={2.4} c="#8a8ae0">Drawing</T>
      <T x={768} y={515} s={2.4} c="#8a8ae0">Number</T>
      <T x={708} y={521} s={3.4}>D3026</T>
      <T x={768} y={521} s={4.6}>2</T>
      <path d="M703 510 V528 M789 510 V528" stroke="#111" strokeWidth="1" />
    </svg>
  );
}

/* ---------- status bar ---------- */
const StatBox = ({ on, children, w = 16 }: { on?: boolean; children: React.ReactNode; w?: number }) => (
  <span style={{ width: w }} className={"h-[16px] flex items-center justify-center shrink-0 " + (on ? "bg-[#5a88b4]" : "")}>{children}</span>
);

function StatusBar() {
  return (
    <div className="h-[19px] flex items-center bg-[#222a35] text-[#b9bdc4] leading-none relative">
      <span className="ml-[16px] w-[26px] h-[13px] flex items-center justify-center text-[9px] text-[#a3a8b0]">模型</span>
      <span className="ml-[2px] w-[52px] h-[13px] bg-[#323a47] rounded-[3px] flex items-center justify-center text-[10px] font-semibold text-[#e4e6e9]">Layout1</span>
      <span className="ml-[4px] w-[14px] h-[11px] bg-[#2b323d] rounded-[2px] flex items-center justify-center text-[11px] font-semibold text-[#aab0b8]">+</span>
      <span className="w-[529px]" />
      <span className="w-[23px] h-[16px] bg-[#333b48] flex items-center justify-center text-[9px] text-[#d0d3d8]">图纸</span>
      <span className="w-[2px]" />
      <div className="w-[126px] h-[16px] bg-[#333b48] flex items-center pl-[2px]">
        <StatBox w={17}><S w={13} h={13}><path d="M1.5 1 V11.5 H13" stroke={G} /><path d="M1.5 7 H6 V11.5" stroke={G} strokeWidth=".7" /></S></StatBox>
        <span className="w-[1px]" />
        <StatBox on><S w={14} h={14}><circle cx="6" cy="8" r="5" stroke={W} strokeWidth="1.2" /><path d="M3 11 L13 3 M3 11 H13" stroke={W} /></S></StatBox>
        <Caret className="ml-[4px]" />
        <span className="w-[7px]" />
        <StatBox><S w={13} h={13}><path d="M2 2 L11 12" stroke="#e25b4d" strokeWidth="1.2" /><path d="M6.5 1 V12" stroke="#49b86b" strokeWidth="1" /></S></StatBox>
        <Caret className="ml-[5px]" />
        <span className="w-[5px]" />
        <StatBox on><S w={14} h={13}><path d="M1 12 H13 M1 12 L12 3" stroke={W} strokeWidth="1.2" /></S></StatBox>
        <span className="w-[1px]" />
        <StatBox on><S w={13} h={13}><rect x="2" y="2" width="10" height="10" stroke={W} /><rect x=".5" y=".5" width="3" height="3" fill="#5a88b4" stroke={W} /></S></StatBox>
        <Caret className="ml-[4px]" />
      </div>
      <span className="w-[2px]" />
      <div className="w-[52px] h-[16px] bg-[#333b48] flex items-center justify-around px-[2px]">
        <S w={13} h={13}><rect x="2" y="2" width="9" height="9" stroke={G} strokeDasharray="2 1.4" /><circle cx="6.5" cy="6.5" r="1.5" stroke={G} strokeWidth=".7" /></S>
        <S w={14} h={13}><path d="M6 1 V6 M6 6 L1 12 M6 6 L11 12" stroke={W} strokeWidth="1.3" /><circle cx="11" cy="3" r="1.5" stroke={W} /></S>
        <S w={14} h={13}><path d="M6 1 V6 M6 6 L1 12 M6 6 L11 12" stroke={W} strokeWidth="1.3" /><path d="M11 1 V5 M9 3 H13" stroke={W} /></S>
      </div>
      <span className="w-[2px]" />
      <div className="w-[48px] h-[16px] bg-[#333b48] flex items-center pl-[4px]">
        <S w={13} h={13}><circle cx="6.5" cy="6.5" r="3.4" stroke={W} strokeWidth="2.2" /><path d="M6.5 0 V3 M6.5 10 V13 M0 6.5 H3 M10 6.5 H13 M2 2 L4 4 M9 9 L11 11 M11 2 L9 4 M4 9 L2 11" stroke={W} strokeWidth="1.4" /></S>
        <Caret className="ml-[3px]" />
        <S w={13} h={13} className="ml-[4px]"><path d="M6.5 0 V13 M0 6.5 H13" stroke={W} strokeWidth="1.4" /></S>
      </div>
      <span className="w-[2px]" />
      <div className="w-[59px] h-[16px] bg-[#333b48] flex items-center pl-[3px] gap-[3px]">
        <S w={13} h={13}><rect x="3" y="1" width="5" height="5" stroke={W} /><circle cx="10" cy="7" r="2" stroke={W} /><path d="M3 12 L5 8 L7 12 Z" stroke={W} /></S>
        <S w={16} h={16}><circle cx="8" cy="7" r="6.5" fill="#4d7fb8" /><path d="M8 1 V13 M2 7 H14" stroke="#cfe0f0" strokeWidth=".7" /><rect x="1" y="8" width="6" height="6" fill="#e8b23f" /><path d="M8 12 L10 15 L15 9" stroke="#4cc07a" strokeWidth="2" /></S>
        <S w={13} h={13}><rect x="1" y="4" width="6" height="4.5" rx="2" stroke={Y} /><rect x="6" y="5" width="6" height="4.5" rx="2" stroke={Y} /></S>
      </div>
      <span className="w-[2px]" />
      <div className="flex-1 h-[16px] bg-[#333b48] flex items-center pl-[3px] gap-[5px]">
        <S w={13} h={11}><rect x=".5" y=".5" width="12" height="10" stroke={G} /><path d="M3 8 L5.5 5.5 M3 8 H5 M3 8 V6 M10 3 L7.5 5.5 M10 3 H8 M10 3 V5" stroke={W} /></S>
        <S w={13} h={11}><path d="M0 1 H13 M0 5.5 H13 M0 10 H13" stroke={W} strokeWidth="1.2" /></S>
      </div>
    </div>
  );
}

/* ---------- canvas ---------- */
function Canvas() {
  return (
    <div className="flex-1 relative bg-[#8b8b8b] overflow-hidden min-h-0">
      <div className="ml-[221px] w-[583px] h-full bg-white border-x border-dashed border-[#b9b9b9] box-content">
        <Drawing />
      </div>

      {/* crosshair */}
      <svg className="absolute left-[46px] top-[18px]" width={52} height={52} viewBox="0 0 52 52" fill="none">
        <path d="M26 0 V23 M26 30 V52 M1 26 H22 M30 26 H51" stroke="#4d4d4d" strokeWidth="1" />
        <rect x="22.5" y="22.5" width="6" height="6" stroke="#3b3b3b" />
      </svg>

      {/* UCS */}
      <svg className="absolute left-[4px] top-[328px]" width={44} height={66} viewBox="0 0 44 66" fill="none">
        <path d="M3 2 V64 H40 Z" stroke="#4f72b8" strokeWidth=".9" />
        <path d="M3 57 H10 V64 M9 13 L12 21 L17 13 M12 21 V27 M29 57 L37 64 M36 56 L28 64" stroke="#4f72b8" strokeWidth=".8" />
      </svg>

      {/* viewport controls */}
      <div className="absolute right-[5px] top-[5px] flex items-center gap-[5px]">
        <span className="w-[9px] h-[4px] bg-[#eeeeee] border border-[#555]" />
        <S w={11} h={11}><rect x="3" y="1" width="7" height="7" stroke="#eee" strokeWidth="1.2" /><rect x="1" y="3" width="7" height="7" stroke="#444" fill="#bbb" /></S>
        <S w={10} h={10}><path d="M1 1 L9 9 M9 1 L1 9" stroke="#eee" strokeWidth="2" /></S>
      </div>

      {/* navigation bar */}
      <div className="absolute left-[977px] top-[18px] w-[22px] h-[92px] bg-[#939393] border border-[#7e7e7e] rounded-[2px] flex flex-col items-center">
        <div className="h-[6px] w-full mt-[1px] border-t-2 border-dotted border-[#a8a8a8]" />
        <S w={18} h={20} className="mt-[4px]"><circle cx="8" cy="9" r="6" stroke="#a8a8a8" strokeWidth="2" /><circle cx="8" cy="9" r="2.5" stroke="#a8a8a8" /></S>
        <span className="-mt-[6px] ml-[10px] text-[6px] font-bold text-[#a9b5c6] leading-none">2D</span>
        <S w={16} h={18} className="mt-[2px]"><path d="M4 16 L1 9 M4 16 H12 L15 8 V5 M5 10 V3 M8 9 V2 M11 9 V3 M14 9 V5" stroke="#a8a8a8" strokeWidth="1.2" /></S>
        <S w={18} h={18} className="mt-[2px]"><path d="M1 1 L16 15 M16 1 L1 15" stroke="#a8a8a8" /><circle cx="12" cy="12" r="3.5" stroke="#a8a8a8" /></S>
        <Caret className="mt-[2px] !border-t-[#777]" />
      </div>

      {/* command history */}
      <div className="absolute left-[245px] top-[336px] flex flex-col items-start text-[9.5px] text-[#e2e2e2] leading-none">
        <span className="h-[11px] px-[3px] w-[28px] bg-[#9a9a9a] flex items-center mb-[4px] rounded-[1px]">命令:</span>
        <span className="h-[11px] px-[3px] w-[28px] bg-[#9a9a9a] flex items-center mb-[4px] rounded-[1px]">命令:</span>
        <span className="h-[12px] px-[3px] w-[69px] bg-[#9a9a9a] flex items-center whitespace-nowrap rounded-[1px]">命令:&nbsp;&nbsp;_SAVEAS</span>
      </div>

      {/* command line */}
      <div className="absolute left-[199px] top-[380px] w-[601px] h-[21px] flex">
        <div className="w-[41px] h-full bg-[#474d59] flex items-center rounded-tl-[3px]">
          <span className="ml-[4px] w-[3px] h-[13px] border-x border-dotted border-[#aab0b8]" />
          <S w={9} h={9} className="ml-[4px]"><path d="M1 1 L8 8 M8 1 L1 8" stroke={W} strokeWidth="1.4" /></S>
          <span className="w-[4px]" />
          <span className="w-[17px] h-full bg-[#5b616c] flex items-center justify-center"><S w={12} h={12}><path d="M1 11 L7 5 M7 5 C6 2 9 0 11 1 L9 3 L10 4 L12 2 C12 5 9 7 7 5" stroke={W} strokeWidth="1.4" /></S></span>
        </div>
        <div className="flex-1 h-[17px] bg-[#ffffff] border-y-[2px] border-r-[2px] border-[#b4b4b4] flex items-center pl-[3px] relative">
          <S w={13} h={10}><rect x=".5" y=".5" width="11" height="8.5" stroke="#555" fill="#e8e8e8" /><rect x=".5" y=".5" width="11" height="2" fill="#555" /><path d="M2 5 L4 6 L2 7 M5 7 H7" stroke="#333" strokeWidth=".6" /></S>
          <Caret className="ml-[1px] !border-t-[#555]" />
          <span className="ml-[6px] text-[9.5px] italic text-[#a3a3a3] tracking-[0.5px]">键入命令</span>
          <Caret className="absolute right-[2px] rotate-180 !border-t-[#666]" />
        </div>
      </div>
    </div>
  );
}

/* ---------- watermark ---------- */
function Watermark() {
  return (
    <div className="absolute left-[214px] top-[51px] w-[170px] h-[32px] pointer-events-none">
      <svg className="absolute left-0 top-0" width={34} height={30} viewBox="0 0 36 32" fill="none">
        <circle cx="18" cy="16" r="15" fill="#ededed" />
        <path d="M7 22 C13 14 18 12 27 5 C22 12 20 18 22 24 M10 16 L15 18 M24 22 L30 23" stroke="#3a4453" strokeWidth="1.2" />
      </svg>
      <span className="absolute left-[53px] top-[7px] text-[13px] font-bold tracking-[0.3px] text-white leading-none whitespace-nowrap [text-shadow:0_0_2px_#222]">伤逝的安详</span>
      <span className="absolute left-[39px] top-[23px] text-[5.5px] text-white leading-none whitespace-nowrap [text-shadow:0_0_1px_#222]">关注互联网与系统软件技术的IT科技博客</span>
    </div>
  );
}

export default function App() {
  return (
    <div className="w-[1000px] h-[549px] relative flex flex-col overflow-hidden bg-[#20262f] [font-family:'Noto_Sans','Noto_Sans_CJK_SC',sans-serif]">
      <TitleBar />
      <TabRow />
      <Ribbon />
      <DocTabs />
      <Canvas />
      <StatusBar />
      <Watermark />
    </div>
  );
}
